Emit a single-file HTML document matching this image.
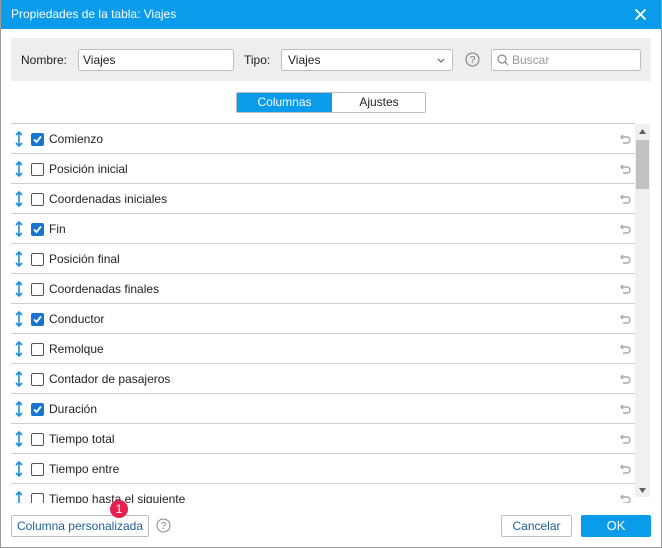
<!DOCTYPE html>
<html><head><meta charset="utf-8"><style>
*{box-sizing:border-box;margin:0;padding:0}
body{width:662px;height:548px;overflow:hidden;font-family:"Liberation Sans",Arial,sans-serif;font-size:12px;color:#222;background:#fff;position:relative}
.frame{position:absolute;left:0;top:0;width:662px;height:548px;border:1px solid #9a9a9a;border-top:none;pointer-events:none}
.title{position:absolute;left:0;top:0;width:662px;height:29px;background:#0a9bea;color:#fff;font-size:12px;line-height:29px;padding-left:11px}
.x{position:absolute;right:15px;top:8px}
.bar{position:absolute;left:11px;top:38px;width:640px;height:43px;background:#eeeeee}
.lbl{position:absolute;top:15px;font-size:12px}
.inp{position:absolute;top:11px;height:22px;border:1px solid #bdbdbd;border-radius:3px;background:#fff;padding-left:4px;line-height:20px}
.tabs{position:absolute;left:236px;top:92px;width:190px;height:21px;border:1px solid #bdbdbd;border-radius:2px}
.tab1{position:absolute;left:0;top:0;width:95px;height:19px;background:#0a9bea;color:#fff;text-align:center;line-height:19px}
.tab2{position:absolute;left:95px;top:0;width:94px;height:19px;text-align:center;line-height:19px;color:#222}
.list{position:absolute;left:11px;top:123px;width:624px;height:380px;overflow:hidden;border-top:1px solid #ccc}
.row{height:30px;border-bottom:1px solid #cfcfcf;position:relative}
.row svg.a{position:absolute;left:4px;top:7px}
.cb{position:absolute;left:20px;top:9px;width:13px;height:13px;border:1px solid #555;border-radius:2px;background:#fff}
.cb.on{background:#1675d1;border-color:#1675d1}
.row .t{position:absolute;left:38px;top:8px;font-size:12px}
.row svg.u{position:absolute;right:4px;top:10px}
.sb{position:absolute;left:635px;top:124px;width:15px;height:373px;background:#f0f0f0}
.thumb{position:absolute;left:1px;top:16px;width:13px;height:49px;background:#c1c1c1}
.btn{position:absolute;top:515px;height:22px;border:1px solid #bdbdbd;border-radius:2px;background:#fff;text-align:center;line-height:20px}
</style></head><body>
<div class="title">Propiedades de la tabla: Viajes
<svg class="x" width="13" height="13" viewBox="0 0 13 13"><path d="M1.5 1.5L11.5 11.5M11.5 1.5L1.5 11.5" stroke="#fff" stroke-width="1.8"/></svg></div>
<div class="bar">
<span class="lbl" style="left:10px">Nombre:</span>
<div class="inp" style="left:67px;width:156px">Viajes</div>
<span class="lbl" style="left:233px">Tipo:</span>
<div class="inp" style="left:270px;width:172px;padding-left:6px">Viajes
<svg style="position:absolute;right:7px;top:8px" width="8" height="5" viewBox="0 0 8 5"><path d="M1 1L4 4L7 1" stroke="#555" fill="none"/></svg></div>
<svg style="position:absolute;left:454px;top:14px" width="15" height="15" viewBox="0 0 15 15"><circle cx="7.5" cy="7.5" r="6.5" stroke="#777" fill="none"/><text x="7.5" y="11" font-size="10" text-anchor="middle" fill="#777" font-family="Liberation Sans">?</text></svg>
<div class="inp" style="left:480px;width:150px;color:#999;padding-left:20px">Buscar
<svg style="position:absolute;left:5px;top:4px" width="12" height="12" viewBox="0 0 12 12"><circle cx="5" cy="5" r="4" stroke="#888" fill="none" stroke-width="1.2"/><path d="M8 8L11 11" stroke="#888" stroke-width="1.2"/></svg></div>
</div>
<div class="tabs"><div class="tab1">Columnas</div><div class="tab2">Ajustes</div></div>
<div class="list"></div>
<div class="sb"><svg style="position:absolute;left:4px;top:5px" width="7" height="5"><path d="M0 5L3.5 0L7 5Z" fill="#606060"/></svg><div class="thumb"></div><svg style="position:absolute;left:4px;top:364px" width="7" height="5"><path d="M0 0L3.5 5L7 0Z" fill="#606060"/></svg></div>
<div class="btn" style="left:11px;width:138px;color:#1d5f9a">Columna personalizada</div>
<div style="position:absolute;left:110px;top:500px;width:18px;height:18px;border-radius:9px;background:#e8204f;color:#fff;text-align:center;line-height:18px;font-size:12px">1</div>
<svg style="position:absolute;left:156px;top:518px" width="15" height="15" viewBox="0 0 15 15"><circle cx="7.5" cy="7.5" r="6.5" stroke="#888" fill="none"/><text x="7.5" y="11" font-size="10" text-anchor="middle" fill="#888" font-family="Liberation Sans">?</text></svg>
<div class="btn" style="left:501px;width:71px;color:#1d5f9a">Cancelar</div>
<div class="btn" style="left:581px;width:70px;background:#0a9bea;border-color:#0a9bea;color:#fff;font-size:13px">OK</div>
<div class="frame"></div>
<script>
var items=[["Comienzo",1],["Posición inicial",0],["Coordenadas iniciales",0],["Fin",1],["Posición final",0],["Coordenadas finales",0],["Conductor",1],["Remolque",0],["Contador de pasajeros",0],["Duración",1],["Tiempo total",0],["Tiempo entre",0],["Tiempo hasta el siguiente",0]];
var h="";items.forEach(function(it){h+='<div class="row"><svg class="a" width="8" height="16" viewBox="0 0 8 16"><path d="M4 1V15M1 4L4 1L7 4M1 12L4 15L7 12" stroke="#1b8fe0" stroke-width="1.6" fill="none"/></svg><div class="cb'+(it[1]?' on':'')+'">'+(it[1]?'<svg width="11" height="11" viewBox="0 0 11 11" style="position:absolute;left:0;top:0"><path d="M2 5.5L4.5 8L9 2.5" stroke="#fff" stroke-width="1.8" fill="none"/></svg>':'')+'</div><span class="t">'+it[0]+'</span><svg class="u" width="11" height="10" viewBox="0 0 11 10"><path d="M3 1L1 3L3 5M1 3H7A3 3 0 0 1 7 9H3" stroke="#aaa" stroke-width="1.4" fill="none"/></svg></div>';});
document.querySelector('.list').innerHTML=h;
</script>
</body></html>
